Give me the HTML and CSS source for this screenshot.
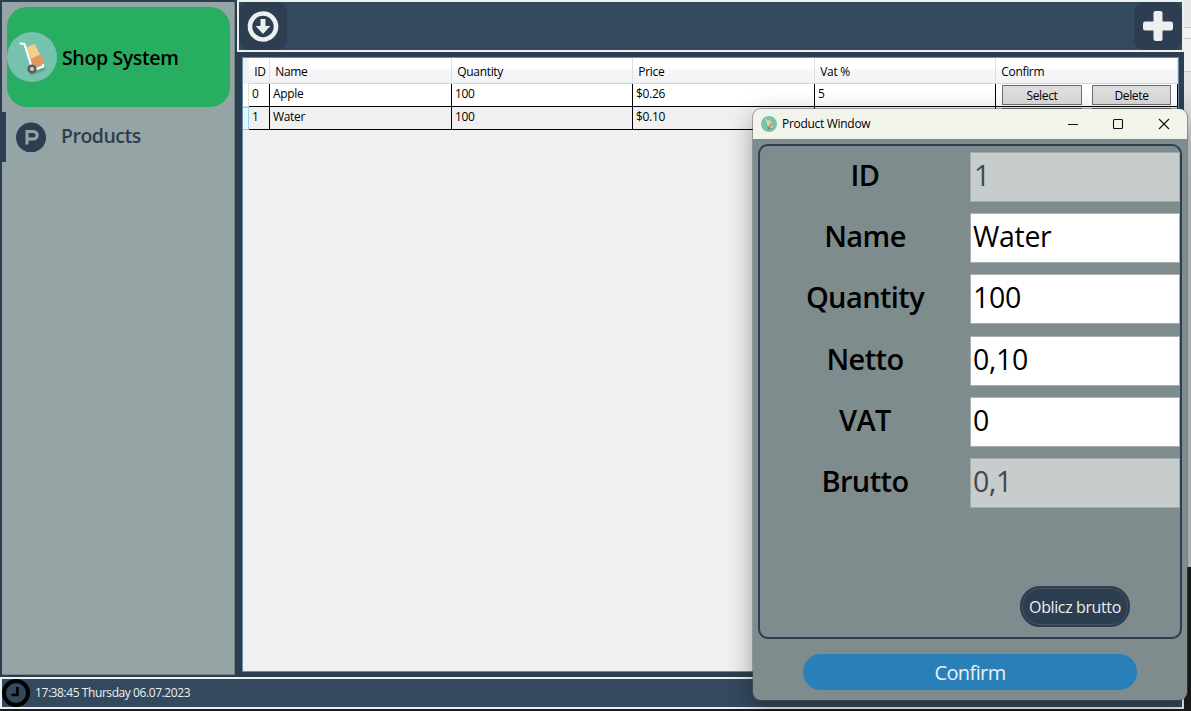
FILE: index.html
```html
<!DOCTYPE html>
<html lang="en">
<head>
<meta charset="utf-8">
<title>Shop System</title>
<link rel="stylesheet" href="styles.css">
</head>
<body>
<svg class="defs" width="0" height="0" aria-hidden="true">
  <symbol id="trolley" viewBox="0 0 50 50">
    <circle cx="25" cy="25" r="25" fill="#76c2af"/>
    <path d="M23 42l9-3 6-2" stroke="#62a292" stroke-width="3" fill="none"/>
    <path d="M20.500 15.500l7-3 5 10-8.500 4z" fill="#f5cf87" stroke="#f5cf87" stroke-width="1" stroke-linejoin="round"/>
    <path d="M24 28l10-4 2.500 7.500-10.500 3.500z" fill="#e0995e" stroke="#e0995e" stroke-width="2" stroke-linejoin="round"/>
    <path d="M13.500 11.500l4 .5 7.500 24M28 37.500l8-3v-1.500" fill="none" stroke="#fff" stroke-width="2.200" stroke-linecap="round" stroke-linejoin="round"/>
    <circle cx="25" cy="37" r="3.300" fill="#f5cf87" stroke="#4f5d73" stroke-width="2.600"/>
  </symbol>
</svg>
<div class="desktop">
  <div class="main">
    <div class="upper">
      <aside class="sidebar">
        <div class="brand">
          <svg class="brand-logo" width="50" height="50"><use href="#trolley"/></svg>
          <span class="brand-name">Shop System</span>
        </div>
        <div class="nav">
          <svg width="30" height="30" viewBox="0 0 30 30"><circle cx="15" cy="15.500" r="15" fill="#2c3e50"/><path d="M11 22.500V9.500h6.500a3.700 3.700 0 0 1 0 7.400H11" fill="none" stroke="#95a5a6" stroke-width="3"/></svg>
          <span class="nav-name">Products</span>
        </div>
      </aside>
      <div class="content">
        <div class="topbar">
          <div class="tool"><svg width="32" height="32" viewBox="0 0 32 32"><circle cx="16" cy="16.500" r="13" fill="none" stroke="#ecf0f1" stroke-width="4.600"/><path d="M13.500 9h5v7h4.800L16 24l-7.300-8h4.800z" fill="#ecf0f1"/></svg></div>
          <div class="tool"><svg width="32" height="32" viewBox="0 0 32 32"><rect x="11.500" y="1" width="9" height="30" rx="2.200" fill="#ecf0f1"/><rect x="1" y="11.500" width="30" height="9" rx="2.200" fill="#ecf0f1"/></svg></div>
        </div>
        <div class="grid">
          <div class="row head"><i></i><span>ID</span><span>Name</span><span>Quantity</span><span>Price</span><span>Vat %</span><span>Confirm</span></div>
          <div class="row"><i></i><span>0</span><span>Apple</span><span>100</span><span>$0.26</span><span>5</span><span class="actions"><button>Select</button><button>Delete</button></span></div>
          <div class="row alt"><i></i><span>1</span><span>Water</span><span>100</span><span>$0.10</span><span></span><span class="actions"><button></button><button></button></span></div>
        </div>
      </div>
    </div>
    <footer class="status">
      <svg width="28" height="28" viewBox="0 0 28 28"><circle cx="14" cy="14" r="12" fill="none" stroke="#000" stroke-width="4"/><path d="M15.500 8v8H9.500" fill="none" stroke="#000" stroke-width="2.600"/></svg>
      <span class="clock">17:38:45 Thursday 06.07.2023</span>
    </footer>
  </div>
  <div class="behind"><div class="behind-light"></div><div class="behind-dark"></div></div>

  <section class="dialog">
    <header class="titlebar">
      <svg width="16" height="16"><use href="#trolley"/></svg>
      <span class="title">Product Window</span>
      <svg class="controls" width="102" height="12" viewBox="0 0 102 12" fill="none" stroke="#111" stroke-width="1.100"><path d="M0 6.500h10M91 1l10 10M101 1l-10 10"/><rect x="45.500" y="1.500" width="9" height="9" rx="1"/></svg>
    </header>
    <div class="form">
      <div class="field"><label>ID</label><div class="input off one">1</div></div>
      <div class="field"><label>Name</label><div class="input">Water</div></div>
      <div class="field"><label>Quantity</label><div class="input">100</div></div>
      <div class="field"><label>Netto</label><div class="input">0,10</div></div>
      <div class="field"><label>VAT</label><div class="input">0</div></div>
      <div class="field"><label>Brutto</label><div class="input off">0,1</div></div>
      <div class="calc">Oblicz brutto</div>
    </div>
    <div class="confirm">Confirm</div>
  </section>
</div>
</body>
</html>
```
FILE: styles.css
```css
* { box-sizing: border-box; }
body { margin: 0; overflow: hidden; background: #1b1b1d; font: 12px/16px "Open Sans", "Noto Sans", sans-serif; color: #000; }
.defs { position: absolute; }
.desktop { position: relative; width: 1191px; height: 711px; display: flex; overflow: hidden; }
.main { width: 1184px; height: 709px; background: #2c3e50; display: flex; flex-direction: column; }
.upper { display: flex; height: 677px; }
.sidebar { width: 233px; height: 673px; margin: 2px; background: #95a5a6; border-right: 1px solid #74868a; border-bottom: 1px solid #74868a; }
.brand { margin: 5px 0 0 5px; width: 223px; height: 100px; border-radius: 20px; background: #27ae60; display: flex; align-items: center; }
.brand-name { margin: 2px 0 0 5px; font-size: 19.500px; line-height: 28px; font-weight: 600; letter-spacing: -.36px; white-space: nowrap; }
.nav { margin-top: 5px; height: 50px; border-left: 4px solid #2c3e50; padding-left: 10px; display: flex; align-items: center; }
.nav-name { margin: -2px 0 0 15px; color: #2c3e50; font-size: 19.500px; line-height: 28px; font-weight: 600; letter-spacing: -.5px; }
.content { width: 947px; }
.topbar { height: 52px; border: 2px solid #ecf0f1; background: #34495e; display: flex; justify-content: space-between; }
.tool { width: 48px; height: 48px; border-radius: 10px; background: #2c3e50; display: flex; align-items: center; justify-content: center; }
.grid { margin: 5px 0 0 5px; width: 937px; height: 615px; border: 1px solid #688caf; background: #f0f0f0; letter-spacing: -.33px; }
.row { display: grid; grid-template-columns: 6px 21px 182px 181px 182px 181px 182px; height: 23px; background: #fff; }
.row > span { border-right: 1px solid #000; border-bottom: 1px solid #000; padding: 2px 0 0 3px; white-space: nowrap; }
.row > i { border-right: 1px solid #ddd; border-bottom: 1px solid #ddd; background: #fff; }
.row.alt { background: #f0f0f0; }
.row.alt > i { background: #e6f6fd; border: 1px solid #8fd3f3; border-left: 0; }
.row.head { height: 26px; background: linear-gradient(#fff 40%, #f7f8fa 42%, #f1f2f4); }
.row.head > span { border-right-color: #dedfe1; border-bottom-color: #d5d5d5; padding: 6px 0 0 5.300px; }
.row.head > i { background: #f0f0f0; border: 0; }
.row > .actions { display: flex; gap: 10px; padding: 1px 0 0 6px; }
.actions button { width: 80px; height: 20px; padding: 1px 0 0; border: 1px solid #707070; background: #ddd; font: inherit; letter-spacing: inherit; line-height: 17px; color: #000; }
.actions button + button { width: 79px; }
.status { height: 32px; border: 2px solid #ecf0f1; background: #34495e; display: flex; align-items: center; color: #ecf0f1; }
.clock { margin-left: 5px; letter-spacing: -.42px; white-space: nowrap; }
.behind { flex: 1; height: 711px; }
.behind-light { height: 567px; background: linear-gradient(#e8e8eb 27px, #c8c8cb 27px, #c8c8cb 28px, #f2f2f4 28px, #f2f2f4 38px, #c8c8cb 38px, #c8c8cb 39px, #f0f0f2 39px, #f0f0f2 71px, #c8c8cb 71px, #c8c8cb 72px, #e5e5e7 72px, #cbcbcf 180px); }
.behind-dark { height: 144px; background: #1b1b1d; }
.dialog { position: absolute; left: 753px; top: 109px; width: 434px; height: 591px; border-radius: 8px; overflow: hidden; background: #7f8c8d; box-shadow: 0 0 0 1px rgba(80, 85, 88, .45), 0 8px 26px rgba(0, 0, 0, .36); }
.titlebar { height: 30px; padding: 0 17px 0 8px; background: #f2f4ec; display: flex; align-items: center; }
.title { margin-left: 5px; letter-spacing: -.3px; }
.controls { margin-left: auto; }
.form { margin: 5px 5px 0; height: 495px; border: 2px solid #2c3e50; border-radius: 10px; padding-top: 6px; display: flex; flex-direction: column; }
.field { height: 61.200px; display: grid; grid-template-columns: 210px 210px; }
.field label { height: 50px; font-size: 29px; line-height: 46px; font-weight: 600; letter-spacing: -.6px; text-align: center; }
.input { height: 50px; border: 1px solid #abadb3; background: #fff; padding-left: 2px; font-size: 28.500px; line-height: 45px; letter-spacing: -.3px; white-space: nowrap; }
.input.off { background: #c7cccc; border-color: #a2abac; color: #444748; }
.input.one { padding-left: 3px; }
.calc { margin: 66.800px 0 0 260px; width: 110px; height: 41px; flex: none; border: 2px solid #2c3e50; outline: 1px solid #435363; outline-offset: -3px; border-radius: 20px; background: #2c3e50; color: #ecf0f1; font-size: 16px; line-height: 39px; letter-spacing: -.38px; text-align: center; white-space: nowrap; }
.confirm { margin: 15px 0 0 50px; width: 334px; height: 36px; border-radius: 18px; background: #2980b9; color: #ecf0f1; font-size: 20px; line-height: 37px; letter-spacing: -.6px; text-align: center; }
```
